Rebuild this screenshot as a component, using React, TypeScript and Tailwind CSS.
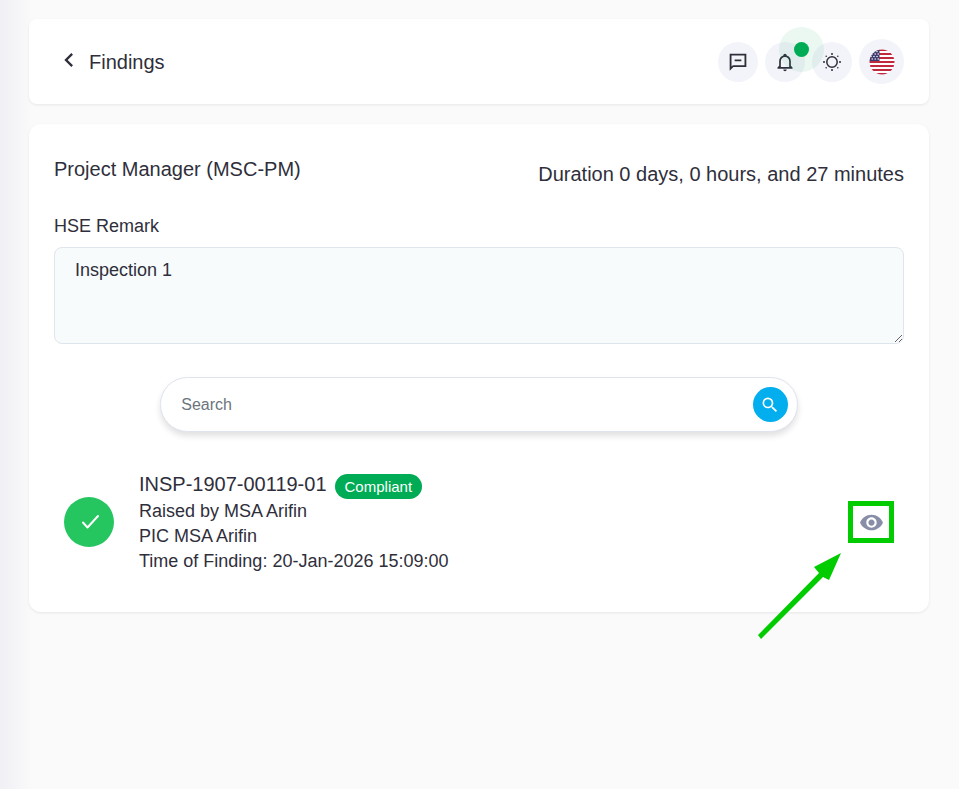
import { useState } from 'react';
import type { ReactNode } from 'react';
import { MdChevronLeft, MdSearch, MdVisibility } from 'react-icons/md';

const findings = [
  {
    code: 'INSP-1907-00119-01',
    status: 'Compliant',
    raisedBy: 'MSA Arifin',
    pic: 'MSA Arifin',
    time: '20-Jan-2026 15:09:00',
  },
];

function MessageIcon() {
  return (
    <svg viewBox="0 0 24 24" className="size-5" fill="currentColor" aria-hidden="true">
      <path d="M22 2H2v20.5L6.500 18H22zM4.200 17.500V4.200h15.600v11.600H5.900zM8 9h8v2.200H8z" />
    </svg>
  );
}

function BellIcon() {
  return (
    <svg viewBox="0 0 24 24" className="size-5" fill="currentColor" aria-hidden="true">
      <path d="M10 21h4c0 1.100-.9 2-2 2s-2-.9-2-2m11-2.500v1.500H3v-1.500l2-2v-5.500c0-3.100 2-5.800 5-6.700V4c0-1.100.9-2 2-2s2 .9 2 2v.3c3 .9 5 3.600 5 6.700v5.500l2 2m-4-7.500c0-2.800-2.200-5-5-5s-5 2.200-5 5v7h10v-7z" />
    </svg>
  );
}

function SunIcon() {
  return (
    <svg viewBox="0 0 20 20" className="size-5" fill="currentColor" aria-hidden="true">
      <circle cx="10" cy="10" r="5.2" fill="none" stroke="currentColor" strokeWidth="1.5" />
      <circle cx="10" cy="2" r="1" />
      <circle cx="10" cy="18" r="1" />
      <circle cx="2" cy="10" r="1" />
      <circle cx="18" cy="10" r="1" />
      <circle cx="4.2" cy="4.2" r="0.8" />
      <circle cx="15.8" cy="4.2" r="0.8" />
      <circle cx="4.2" cy="15.8" r="0.8" />
      <circle cx="15.8" cy="15.8" r="0.8" />
    </svg>
  );
}

function FlagIcon() {
  return (
    <svg viewBox="0 0 26 26" className="size-[26px]" aria-hidden="true">
      <clipPath id="flag-round">
        <circle cx="13" cy="13" r="12.5" />
      </clipPath>
      <g clipPath="url(#flag-round)">
        <rect width="26" height="26" fill="#fff" />
        {[0, 1, 2, 3, 4, 5, 6].map((i) => (
          <rect key={i} y={i * 4} width="26" height="2" fill="#c02a3e" />
        ))}
        <rect width="10.5" height="12" fill="#3c3b6e" />
        <g fill="#fff">
          {[2, 4.5, 7, 9.500].map((y, row) =>
            [2, 5, 8].map((x) => <circle key={`${x}-${y}`} cx={x + (row % 2) * 1.2} cy={y + 0.5} r="0.75" />)
          )}
        </g>
      </g>
    </svg>
  );
}

function CheckIcon() {
  return (
    <svg viewBox="0 0 24 24" className="size-6" fill="none" stroke="currentColor" strokeWidth="2" strokeLinecap="round" strokeLinejoin="round" aria-hidden="true">
      <path d="M6 12.500 10.500 17.500 21 6" />
    </svg>
  );
}

function RoundButton({ label, children }: { label: string; children: ReactNode }) {
  return (
    <button
      type="button"
      aria-label={label}
      className="flex size-10 items-center justify-center rounded-full bg-[#f3f4f9]"
    >
      {children}
    </button>
  );
}

export default function App() {
  const [remark, setRemark] = useState('Inspection 1');
  const [search, setSearch] = useState('');

  return (
    <div className="min-h-screen bg-[#fafafa] bg-linear-to-r from-[#f0f0f5] to-[#fafafa] to-[32px] pt-[19px] pr-[30px] pb-8 pl-[29px] font-['Liberation_Sans',Arial,sans-serif] text-[#2f2f3b]">
      <header className="flex items-center justify-between rounded-lg bg-white px-[25px] py-5 shadow-[0_1px_3px_rgba(0,0,0,0.08)]">
        <div className="flex items-center">
          <button type="button" aria-label="Back" className="pb-1 pl-px">
            <MdChevronLeft className="size-7" />
          </button>
          <h1 className="ml-1.5 text-xl">Findings</h1>
        </div>
        <div className="flex items-center gap-[7px]">
          <RoundButton label="Messages">
            <MessageIcon />
          </RoundButton>
          <div className="relative">
            <RoundButton label="Notifications">
              <BellIcon />
            </RoundButton>
            <span className="pointer-events-none absolute -top-[15px] left-[14px] z-10 flex size-[45px] items-center justify-center rounded-full bg-[#00ab55]/8">
              <span className="size-[15px] rounded-full bg-[#00ab55]" />
            </span>
          </div>
          <RoundButton label="Theme">
            <SunIcon />
          </RoundButton>
          <button
            type="button"
            aria-label="Language"
            className="flex size-[45px] items-center justify-center rounded-full bg-[#f3f4f9]"
          >
            <FlagIcon />
          </button>
        </div>
      </header>

      <main className="mt-5 rounded-xl bg-white px-[25px] pt-[25px] pb-[38px] shadow-[0_1px_3px_rgba(0,0,0,0.08)]">
        <div className="flex items-start justify-between text-xl">
          <h2 className="leading-10">Project Manager (MSC-PM)</h2>
          <p className="leading-[50px]">Duration 0 days, 0 hours, and 27 minutes</p>
        </div>

        <label htmlFor="remark" className="mt-3 block text-lg leading-[30px]">
          HSE Remark
        </label>
        <textarea
          id="remark"
          value={remark}
          onChange={(e) => setRemark(e.target.value)}
          className="mt-1.5 block h-[97px] w-full resize rounded-lg border border-[#dfe5ec] bg-[#f7fbfc] px-5 py-2 text-lg focus:outline-none"
        />

        <form
          onSubmit={(e) => e.preventDefault()}
          className="mx-auto mt-[33px] flex h-[55px] w-3/4 items-center rounded-full border border-[#dfe3ee] bg-white pr-[9px] pl-5 shadow-[0_4px_6px_rgba(0,0,0,0.12)]"
        >
          <input
            type="text"
            aria-label="Search"
            placeholder="Search"
            value={search}
            onChange={(e) => setSearch(e.target.value)}
            className="min-w-0 flex-1 bg-transparent text-base placeholder:text-[#6c757d] focus:outline-none"
          />
          <button
            type="submit"
            aria-label="Submit search"
            className="flex size-[35px] items-center justify-center rounded-full bg-[#03aeee] text-white"
          >
            <MdSearch className="size-5" />
          </button>
        </form>

        <ul className="mt-[38px]">
          {findings.map((item) => (
            <li key={item.code} className="flex items-center px-[10px]">
              <span className="flex size-[50px] shrink-0 items-center justify-center rounded-full bg-[#25c55f] text-white">
                <CheckIcon />
              </span>
              <div className="ml-[25px] flex-1 text-lg leading-[25px]">
                <div className="flex items-end gap-2">
                  <h3 className="text-xl leading-[29px]">{item.code}</h3>
                  <span className="rounded-full bg-[#00ab55] px-[10px] text-[15px] leading-[25px] text-white">
                    {item.status}
                  </span>
                </div>
                <p>Raised by {item.raisedBy}</p>
                <p>PIC {item.pic}</p>
                <p>Time of Finding: {item.time}</p>
              </div>
              <div className="relative">
                <button
                  type="button"
                  aria-label="View finding"
                  className="flex h-[42px] w-[46px] items-center justify-center border-[5px] border-[#00cc00] text-[#888ea8]"
                >
                  <MdVisibility className="size-[25px]" />
                </button>
                <svg
                  viewBox="0 0 86 86"
                  className="pointer-events-none absolute top-[52px] right-[51px] size-[86px] max-w-none"
                  fill="#00cc00"
                  aria-hidden="true"
                >
                  <path d="M1 82 62 20 57 14 84 0 72 27 66 24 4 86z" />
                </svg>
              </div>
            </li>
          ))}
        </ul>
      </main>
    </div>
  );
}
